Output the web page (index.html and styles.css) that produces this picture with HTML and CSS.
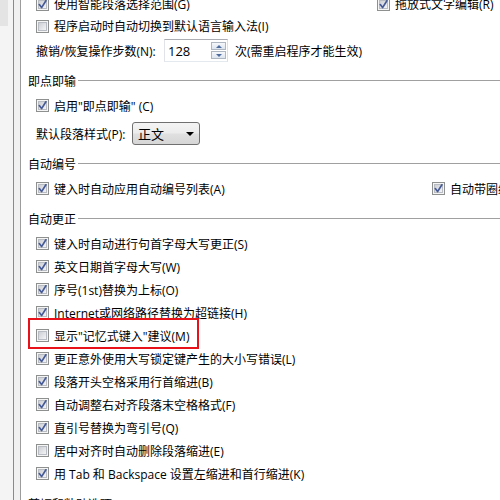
FILE: index.html
```html
<!DOCTYPE html>
<html lang="zh-CN">
<head>
<meta charset="utf-8">
<title>选项</title>
<link rel="stylesheet" href="styles.css">
</head>
<body>
<svg class="defs" width="0" height="0" aria-hidden="true">
  <defs>
    <linearGradient id="cbfill" x1="0" y1="0" x2="1" y2="1">
      <stop offset="0" stop-color="#c9ccd2"/>
      <stop offset="1" stop-color="#f7f7f8"/>
    </linearGradient>
    <symbol id="cb-off" viewBox="0 0 13 13">
      <rect x="0.5" y="0.5" width="12" height="12" fill="#f5f5f5" stroke="#8e8f8f"/>
      <rect x="2.5" y="2.5" width="8" height="8" fill="url(#cbfill)" stroke="#b9bcc2"/>
    </symbol>
    <symbol id="cb-on" viewBox="0 0 13 13">
      <rect x="0.5" y="0.5" width="12" height="12" fill="#f5f5f5" stroke="#8e8f8f"/>
      <rect x="2.5" y="2.5" width="8" height="8" fill="url(#cbfill)" stroke="#b9bcc2"/>
      <path d="M3.3 6.6 L5.6 9.6 L9.9 2.8" fill="none" stroke="#455a96" stroke-width="1.7" stroke-linejoin="round" stroke-linecap="round"/>
    </symbol>
  </defs>
</svg>
<div class="window">
  <div class="sidebar"><div class="sidebar-top"></div></div>
  <div class="frame"></div>
  <div class="content">
    <div class="rows">
      <div class="row tight split split-r1">
        <label class="opt"><svg class="cb"><use href="#cb-on"/></svg><span>使用智能段落选择范围(G)</span></label>
        <label class="opt"><svg class="cb"><use href="#cb-on"/></svg><span>拖放式文字编辑(R)</span></label>
      </div>
      <div class="row tight">
        <label class="opt"><svg class="cb"><use href="#cb-off"/></svg><span>程序启动时自动切换到默认语言输入法(I)</span></label>
      </div>
      <div class="row row-spin">
        <span class="spin-label">撤销/恢复操作步数(N):</span>
        <div class="spin">
          <span class="spin-val">128</span>
          <div class="spin-btns">
            <div class="spin-btn"><i class="tri-up"></i></div>
            <div class="spin-btn"><i class="tri-down"></i></div>
          </div>
        </div>
        <span class="spin-note">次(需重启程序才能生效)</span>
      </div>
    </div>

    <div class="group">
      <div class="legend">即点即输</div>
      <div class="rows">
        <div class="row">
          <label class="opt"><svg class="cb"><use href="#cb-on"/></svg><span>启用"即点即输" (C)</span></label>
        </div>
        <div class="row row-select">
          <span class="select-label">默认段落样式(P):</span>
          <div class="select"><span>正文</span><i class="select-arrow"></i></div>
        </div>
      </div>
    </div>

    <div class="group">
      <div class="legend">自动编号</div>
      <div class="rows">
        <div class="row split split-a">
          <label class="opt"><svg class="cb"><use href="#cb-on"/></svg><span>键入时自动应用自动编号列表(A)</span></label>
          <label class="opt"><svg class="cb"><use href="#cb-on"/></svg><span>自动带圈编号(U)</span></label>
        </div>
      </div>
    </div>

    <div class="group">
      <div class="legend">自动更正</div>
      <div class="rows">
        <div class="row"><label class="opt"><svg class="cb"><use href="#cb-on"/></svg><span>键入时自动进行句首字母大写更正(S)</span></label></div>
        <div class="row"><label class="opt"><svg class="cb"><use href="#cb-on"/></svg><span>英文日期首字母大写(W)</span></label></div>
        <div class="row"><label class="opt"><svg class="cb"><use href="#cb-on"/></svg><span>序号(1st)替换为上标(O)</span></label></div>
        <div class="row"><label class="opt"><svg class="cb"><use href="#cb-on"/></svg><span>Internet或网络路径替换为超链接(H)</span></label></div>
        <div class="row marked"><label class="opt"><svg class="cb"><use href="#cb-off"/></svg><span>显示"记忆式键入"建议(M)</span></label></div>
        <div class="row"><label class="opt"><svg class="cb"><use href="#cb-on"/></svg><span>更正意外使用大写锁定键产生的大小写错误(L)</span></label></div>
        <div class="row"><label class="opt"><svg class="cb"><use href="#cb-on"/></svg><span>段落开头空格采用行首缩进(B)</span></label></div>
        <div class="row"><label class="opt"><svg class="cb"><use href="#cb-on"/></svg><span>自动调整右对齐段落末空格格式(F)</span></label></div>
        <div class="row"><label class="opt"><svg class="cb"><use href="#cb-on"/></svg><span>直引号替换为弯引号(Q)</span></label></div>
        <div class="row"><label class="opt"><svg class="cb"><use href="#cb-off"/></svg><span>居中对齐时自动删除段落缩进(E)</span></label></div>
        <div class="row"><label class="opt"><svg class="cb"><use href="#cb-on"/></svg><span>用 Tab 和 Backspace 设置左缩进和首行缩进(K)</span></label></div>
      </div>
    </div>

    <div class="group">
      <div class="legend">剪切和粘贴选项</div>
    </div>
  </div>
</div>
</body>
</html>
```

FILE: styles.css
```css
html, body {
  margin: 0;
  padding: 0;
}

body {
  width: 500px;
  height: 500px;
  overflow: hidden;
  background: #ffffff;
  color: #000000;
  font-family: "Open Sans", "Noto Sans CJK SC", "Microsoft YaHei", sans-serif;
  font-size: 12px;
}

.defs {
  position: absolute;
  width: 0;
  height: 0;
}

.window {
  display: flex;
  height: 500px;
}

.sidebar {
  flex: none;
  width: 13px;
  background: #f4f4f4;
}

.sidebar-top {
  width: 8px;
  height: 26px;
  background: #e4e4e4;
}

.frame {
  flex: none;
  width: 6px;
  background: #f1f1f1;
  border-left: 1px solid #8a8a8a;
  border-right: 1px solid #9c9c9c;
}

.content {
  flex: 1;
  min-width: 0;
  margin-top: -7px;
  padding-left: 7px;
  white-space: nowrap;
  overflow: hidden;
}

.rows {
  display: flex;
  flex-direction: column;
  padding-left: 8px;
}

.row {
  height: 23px;
  display: flex;
  align-items: center;
}

.row.tight {
  height: 22px;
}

.row.split {
  display: grid;
  align-items: center;
}

.split-r1 {
  grid-template-columns: 341px auto;
}

.split-a {
  grid-template-columns: 396px auto;
}

.opt {
  display: flex;
  align-items: center;
  gap: 5px;
}

.cb {
  flex: none;
  width: 13px;
  height: 13px;
}

/* spin box */
.row-spin {
  margin-top: 2px;
}

.spin-label {
  width: 128px;
}

.spin {
  box-sizing: border-box;
  width: 64px;
  height: 23px;
  display: flex;
  align-items: center;
  border: 1px solid #abadb3;
  border-color: #abadb3 #dbdfe6 #e3e9ef #e2e3ea;
  background: #ffffff;
}

.spin-val {
  flex: 1;
  padding-left: 3px;
  font-size: 13px;
}

.spin-btns {
  display: flex;
  flex-direction: column;
  gap: 1px;
  margin-right: 1px;
}

.spin-btn {
  box-sizing: border-box;
  width: 15px;
  height: 8px;
  display: flex;
  align-items: center;
  justify-content: center;
  border: 1px solid #aeb6c2;
  background: linear-gradient(#f6f8fb, #dde4ee);
}

.tri-up {
  width: 0;
  height: 0;
  border-left: 3px solid transparent;
  border-right: 3px solid transparent;
  border-bottom: 3px solid #4d6b9c;
}

.tri-down {
  width: 0;
  height: 0;
  border-left: 3px solid transparent;
  border-right: 3px solid transparent;
  border-top: 3px solid #4d6b9c;
}

.spin-note {
  margin-left: 7px;
}

/* select */
.row-select {
  margin-top: 5px;
}

.select-label {
  width: 96px;
}

.select {
  box-sizing: border-box;
  width: 68px;
  height: 23px;
  padding-left: 5px;
  padding-right: 5px;
  display: flex;
  align-items: center;
  justify-content: space-between;
  border: 1px solid #707070;
  border-radius: 3px;
  background: linear-gradient(#f4f4f4 0%, #ececec 48%, #e0e0e0 52%, #d6d6d6 100%);
  font-size: 13px;
}

.select-arrow {
  width: 0;
  height: 0;
  border-left: 4px solid transparent;
  border-right: 4px solid transparent;
  border-top: 4px solid #000000;
}

/* groups */
.group {
  margin-top: 10px;
}

.legend {
  height: 17px;
  margin-bottom: 5px;
  display: flex;
  align-items: center;
}

.legend::after {
  content: "";
  flex: 1;
  height: 1px;
  margin-left: 2px;
  background: #a0a0a0;
}

/* red annotation box */
.row.marked {
  position: relative;
}

.row.marked::after {
  content: "";
  position: absolute;
  left: -8px;
  top: -6px;
  width: 171px;
  height: 31px;
  box-sizing: border-box;
  border: 2px solid #e8131a;
}
```
